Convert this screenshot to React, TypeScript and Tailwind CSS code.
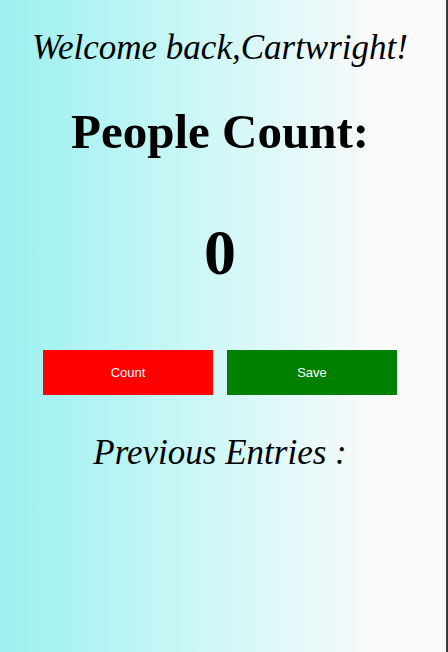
export default function App() {
  return (
    <div className="flex h-[652px] w-[448px] overflow-hidden">
      <main className="flex-1 bg-[linear-gradient(to_right,#9cf0f0,#d8f8f8_55%,#fafafa_85%)] pr-[6px] text-center font-['Liberation_Serif',serif] text-black">
        <h2 className="pt-[28px] text-[35px] italic leading-[40px]">Welcome back,Cartwright!</h2>
        <h1 className="mt-[37px] text-[49px] font-bold leading-[54px]">People Count:</h1>
        <h2 className="mt-[56px] text-[64px] font-bold leading-[76px]">0</h2>
        <div className="mt-[59px] flex justify-center gap-[14px]">
          <button className="h-[45px] w-[170px] bg-[#ff0000] font-['Liberation_Sans',sans-serif] text-[13px] text-white">
            Count
          </button>
          <button className="h-[45px] w-[170px] bg-[#008000] font-['Liberation_Sans',sans-serif] text-[13px] text-white">
            Save
          </button>
        </div>
        <h3 className="mt-[38px] text-[35px] italic leading-[40px]">Previous Entries :</h3>
      </main>
      <div className="w-[2px] bg-[#3c3c3c]" />
    </div>
  );
}
